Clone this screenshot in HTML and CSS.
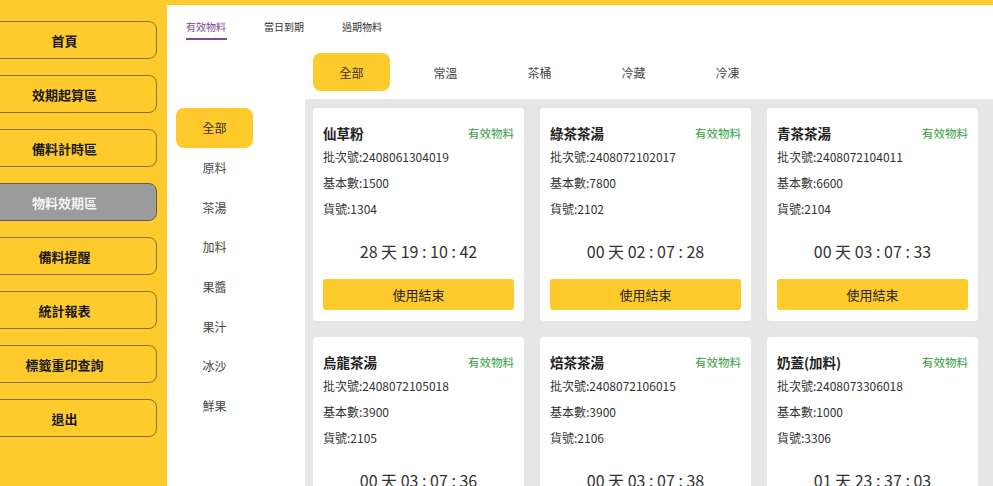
FILE: index.html
```html
<!DOCTYPE html>
<html lang="zh-Hant">
<head>
<meta charset="utf-8">
<title>物料效期區</title>
<link rel="stylesheet" href="styles.css">
</head>
<body>
<div class="app">
  <nav class="sidebar">
    <button class="nav-btn">首頁</button>
    <button class="nav-btn">效期起算區</button>
    <button class="nav-btn">備料計時區</button>
    <button class="nav-btn active">物料效期區</button>
    <button class="nav-btn">備料提醒</button>
    <button class="nav-btn">統計報表</button>
    <button class="nav-btn">標籤重印查詢</button>
    <button class="nav-btn">退出</button>
  </nav>
  <main class="main">
    <div class="tabs">
      <span class="tab active">有效物料</span>
      <span class="tab">當日到期</span>
      <span class="tab">過期物料</span>
    </div>
    <div class="body">
      <div class="cat-col">
        <div class="cat active">全部</div>
        <div class="cat">原料</div>
        <div class="cat">茶湯</div>
        <div class="cat">加料</div>
        <div class="cat">果醬</div>
        <div class="cat">果汁</div>
        <div class="cat">冰沙</div>
        <div class="cat">鮮果</div>
      </div>
      <div class="content">
        <div class="temp-row">
          <div class="temp active">全部</div>
          <div class="temp">常溫</div>
          <div class="temp">茶桶</div>
          <div class="temp">冷藏</div>
          <div class="temp">冷凍</div>
        </div>
        <div class="grid-area">
          <div class="grid">
            <div class="card">
              <div class="card-head"><span class="name">仙草粉</span><span class="status">有效物料</span></div>
              <div class="line">批次號:2408061304019</div>
              <div class="line">基本數:1500</div>
              <div class="line">貨號:1304</div>
              <div class="timer">28 天 19 : 10 : 42</div>
              <button class="end-btn">使用結束</button>
            </div>
            <div class="card">
              <div class="card-head"><span class="name">綠茶茶湯</span><span class="status">有效物料</span></div>
              <div class="line">批次號:2408072102017</div>
              <div class="line">基本數:7800</div>
              <div class="line">貨號:2102</div>
              <div class="timer">00 天 02 : 07 : 28</div>
              <button class="end-btn">使用結束</button>
            </div>
            <div class="card">
              <div class="card-head"><span class="name">青茶茶湯</span><span class="status">有效物料</span></div>
              <div class="line">批次號:2408072104011</div>
              <div class="line">基本數:6600</div>
              <div class="line">貨號:2104</div>
              <div class="timer">00 天 03 : 07 : 33</div>
              <button class="end-btn">使用結束</button>
            </div>
            <div class="card">
              <div class="card-head"><span class="name">烏龍茶湯</span><span class="status">有效物料</span></div>
              <div class="line">批次號:2408072105018</div>
              <div class="line">基本數:3900</div>
              <div class="line">貨號:2105</div>
              <div class="timer">00 天 03 : 07 : 36</div>
              <button class="end-btn">使用結束</button>
            </div>
            <div class="card">
              <div class="card-head"><span class="name">焙茶茶湯</span><span class="status">有效物料</span></div>
              <div class="line">批次號:2408072106015</div>
              <div class="line">基本數:3900</div>
              <div class="line">貨號:2106</div>
              <div class="timer">00 天 03 : 07 : 38</div>
              <button class="end-btn">使用結束</button>
            </div>
            <div class="card">
              <div class="card-head"><span class="name">奶蓋(加料)</span><span class="status">有效物料</span></div>
              <div class="line">批次號:2408073306018</div>
              <div class="line">基本數:1000</div>
              <div class="line">貨號:3306</div>
              <div class="timer">01 天 23 : 37 : 03</div>
              <button class="end-btn">使用結束</button>
            </div>
          </div>
        </div>
      </div>
    </div>
  </main>
</div>
</body>
</html>
```

FILE: styles.css
```css
* { box-sizing: border-box; }
html, body {
  margin: 0;
  padding: 0;
  height: 100%;
  overflow: hidden;
}
body {
  background: #ffca2c;
  font-family: "Noto Sans CJK TC", "Noto Sans", sans-serif;
  color: #333;
}
.app {
  display: flex;
  height: 486px;
}
.sidebar {
  width: 167px;
  flex: none;
  padding-top: 21px;
  display: flex;
  flex-direction: column;
  gap: 16px;
}
.nav-btn {
  width: 185px;
  height: 38px;
  margin-left: -28px;
  background: #ffca2c;
  border: 1px solid #857233;
  border-radius: 8px;
  font-family: "Noto Sans CJK TC", sans-serif;
  font-size: 13px;
  font-weight: 700;
  color: #1a1a1a;
  padding: 0;
  flex: none;
}
.nav-btn.active {
  background: #9b9b9b;
  border-color: #5e5e5e;
  color: #f4f4f4;
}
.main {
  flex: 1;
  margin-top: 5px;
  background: #fff;
  display: flex;
  flex-direction: column;
  min-width: 0;
}
.tabs {
  height: 42px;
  display: flex;
  align-items: flex-start;
  padding-left: 19px;
  gap: 37px;
  flex: none;
}
.tab {
  font-size: 10px;
  line-height: 14px;
  padding-top: 15px;
  padding-bottom: 4px;
  color: #333;
  width: 41px;
  white-space: nowrap;
  border-bottom: 2px solid transparent;
}
.tab.active {
  color: #7e4a92;
  border-bottom-color: #7e4a92;
}
.body {
  flex: 1;
  display: flex;
  min-height: 0;
}
.cat-col {
  width: 138px;
  flex: none;
  padding: 61px 0 0 9px;
  display: flex;
  flex-direction: column;
}
.cat {
  width: 77px;
  height: 39.7px;
  display: flex;
  align-items: center;
  justify-content: center;
  font-size: 12px;
  color: #444;
  border-radius: 8px;
}
.cat.active {
  background: #ffca2c;
  color: #333;
}
.content {
  flex: 1;
  display: flex;
  flex-direction: column;
  min-width: 0;
}
.temp-row {
  height: 52px;
  flex: none;
  display: flex;
  gap: 17px;
  padding: 6px 0 0 8px;
}
.temp {
  width: 77px;
  height: 38px;
  display: flex;
  align-items: center;
  justify-content: center;
  font-size: 12px;
  color: #444;
  border-radius: 8px;
}
.temp.active {
  background: #ffca2c;
  color: #333;
}
.grid-area {
  flex: 1;
  background: #e6e6e6;
  padding: 9px 8px;
  overflow: hidden;
}
.grid {
  display: grid;
  grid-template-columns: repeat(3, 211px);
  gap: 16px;
}
.card {
  background: #fff;
  border-radius: 4px;
  padding: 14px 10px 10px;
  display: flex;
  flex-direction: column;
  height: 213px;
}
.card-head {
  display: flex;
  justify-content: space-between;
  align-items: center;
  height: 22px;
}
.name {
  font-size: 13.5px;
  font-weight: 700;
  color: #222;
}
.status {
  font-size: 11.5px;
  color: #2f9c3c;
}
.line {
  font-size: 12px;
  line-height: 26px;
  color: #333;
}
.timer {
  margin-top: 17px;
  height: 24px;
  line-height: 24px;
  text-align: center;
  font-size: 16px;
  color: #333;
}
.end-btn {
  margin-top: 16px;
  height: 31px;
  width: 100%;
  background: #ffca2c;
  border: none;
  border-radius: 3px;
  font-family: "Noto Sans CJK TC", sans-serif;
  font-size: 13px;
  color: #222;
  padding: 0;
  flex: none;
}
```
